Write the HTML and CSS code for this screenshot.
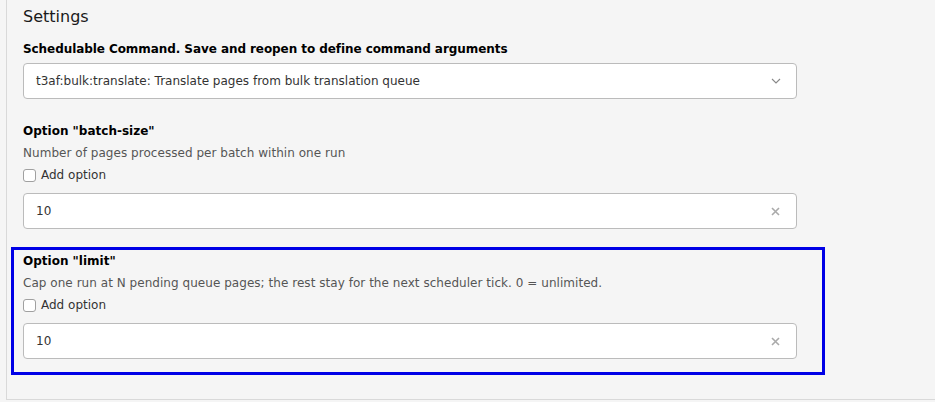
FILE: index.html
```html
<!DOCTYPE html>
<html>
<head>
<meta charset="utf-8">
<link rel="stylesheet" href="styles.css">
</head>
<body>
<div class="panel">
  <h2 class="title">Settings</h2>
  <div class="group first">
    <div class="label">Schedulable Command. Save and reopen to define command arguments</div>
    <div class="control select">
      <span class="value">t3af:bulk:translate: Translate pages from bulk translation queue</span>
      <svg class="chev" width="10" height="6" viewBox="0 0 10 6"><path d="M1 1 L5 5 L9 1" fill="none" stroke="#888" stroke-width="1.1"/></svg>
    </div>
  </div>
  <div class="group">
    <div class="label">Option "batch-size"</div>
    <div class="desc">Number of pages processed per batch within one run</div>
    <label class="check"><span class="box"></span>Add option</label>
    <div class="control input">
      <span class="value">10</span>
      <svg class="clear" width="9" height="9" viewBox="0 0 9 9"><path d="M1 1 L8 8 M8 1 L1 8" stroke="#aaa" stroke-width="1.6"/></svg>
    </div>
  </div>
  <div class="group highlight">
    <div class="label">Option "limit"</div>
    <div class="desc">Cap one run at N pending queue pages; the rest stay for the next scheduler tick. 0 = unlimited.</div>
    <label class="check"><span class="box"></span>Add option</label>
    <div class="control input">
      <span class="value">10</span>
      <svg class="clear" width="9" height="9" viewBox="0 0 9 9"><path d="M1 1 L8 8 M8 1 L1 8" stroke="#aaa" stroke-width="1.6"/></svg>
    </div>
  </div>
</div>
</body>
</html>
```
FILE: styles.css
```css
html, body {
  margin: 0;
  padding: 0;
  background: #f5f5f5;
}
body {
  font-family: "DejaVu Sans", Verdana, sans-serif;
  font-size: 12px;
  color: #1a1a1a;
  overflow: hidden;
}
.panel {
  box-sizing: border-box;
  height: 400px;
  margin-left: 6px;
  border-left: 1px solid #d9d9d9;
  border-bottom: 1px solid #d9d9d9;
  padding: 5px 0 0 16px;
  width: 929px;
}
.title {
  margin: 0 0 9px 0;
  font-size: 16px;
  font-weight: normal;
  line-height: 24px;
  color: #1a1a1a;
}
.group {
  width: 774px;
  margin-bottom: 18px;
}
.group.first {
  margin-bottom: 21px;
}
.label {
  font-weight: bold;
  line-height: 22px;
  color: #000;
}
.first .label {
  margin-bottom: 3px;
  letter-spacing: -0.07px;
}
.desc {
  line-height: 22px;
  color: #555;
  letter-spacing: 0.04px;
}
.check {
  display: flex;
  align-items: center;
  gap: 5px;
  height: 22px;
  margin-bottom: 7px;
  color: #333;
}
.box {
  box-sizing: border-box;
  width: 13px;
  height: 13px;
  border: 1px solid #a0a0a0;
  border-radius: 3px;
  background: #fff;
}
.control {
  box-sizing: border-box;
  height: 36px;
  background: #fff;
  border: 1px solid #bbb;
  border-radius: 4px;
  display: flex;
  align-items: center;
  justify-content: space-between;
  padding: 0 14px 0 12px;
  color: #333;
}
.chev {
  margin-right: 1px;
}
.clear {
  margin-right: 2px;
}
.highlight {
  margin-left: -12px;
  width: 774px;
  padding: 0 25px 13px 9px;
  border: 3px solid #0000e6;
}
```
